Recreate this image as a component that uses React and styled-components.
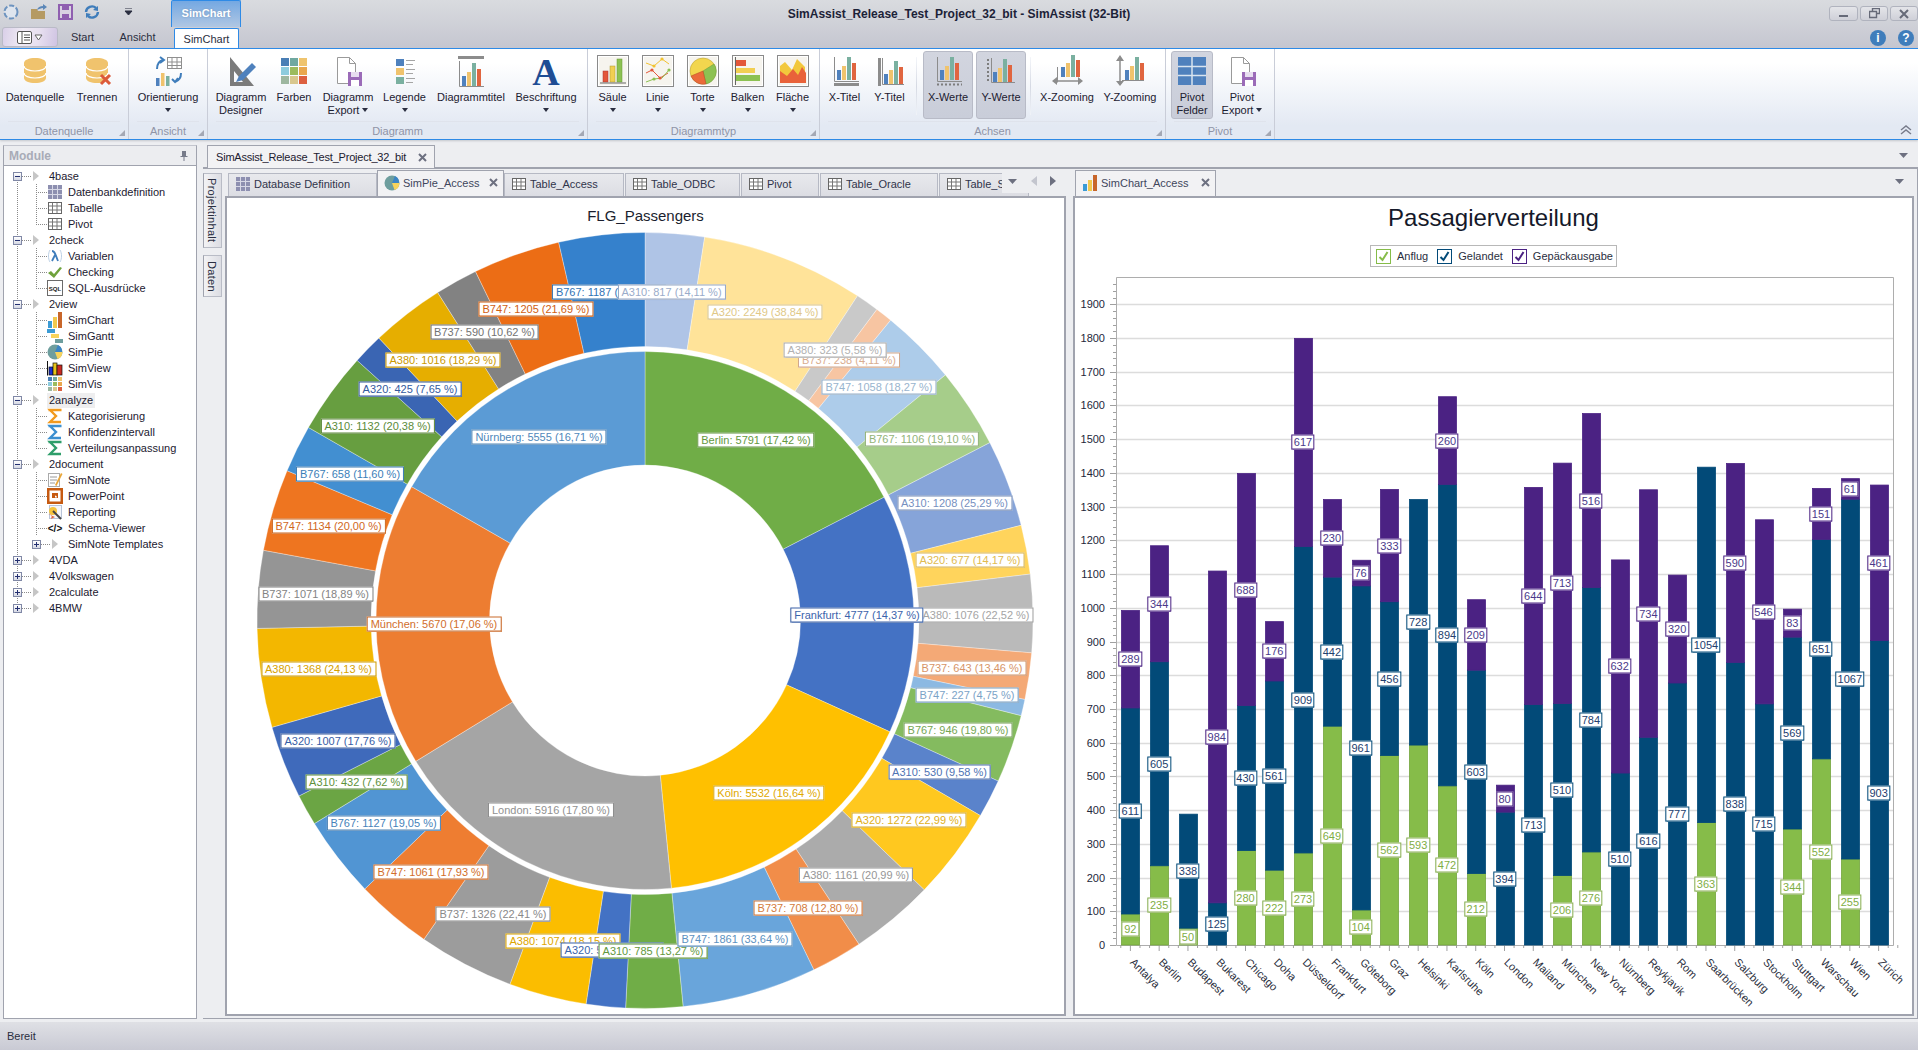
import React from 'react';
import styled, { createGlobalStyle } from 'styled-components';

const FONT = '"Liberation Sans", Arial, sans-serif';

const Global = createGlobalStyle`
  html, body { margin: 0; padding: 0; background: #edeef1; }
  * { box-sizing: border-box; }
`;

// helpers for colour and chart geometry
const shade = (hex, f) =>
  '#' + [1, 3, 5].map((i) => Math.round(parseInt(hex.slice(i, i + 2), 16) * f).toString(16).padStart(2, '0')).join('');

const polar = (cx, cy, r, a) => [cx + r * Math.sin(a), cy - r * Math.cos(a)];
const arcPath = (cx, cy, r0, r1, a0, a1) => {
  const big = a1 - a0 > Math.PI ? 1 : 0;
  const [x1, y1] = polar(cx, cy, r1, a0);
  const [x2, y2] = polar(cx, cy, r1, a1);
  const [x3, y3] = polar(cx, cy, r0, a1);
  const [x4, y4] = polar(cx, cy, r0, a0);
  return `M${x1} ${y1}A${r1} ${r1} 0 ${big} 1 ${x2} ${y2}L${x3} ${y3}A${r0} ${r0} 0 ${big} 0 ${x4} ${y4}Z`;
};

/* ---------- page frame ---------- */

const Page = styled.div`
  width: 1918px;
  height: 1050px;
  overflow: hidden;
  display: flex;
  flex-direction: column;
  background: #edeef1;
  font: 11px ${FONT};
  color: #1e2233;
`;

const TitleBar = styled.header`
  height: 48px;
  flex: none;
  background: linear-gradient(#d9dbdf, #c5c6d0);
`;

const TopRow = styled.div`
  height: 27px;
  display: grid;
  grid-template-columns: 1fr auto 1fr;
`;

const TopLeft = styled.div`
  display: flex;
`;

const Qat = styled.div`
  width: 171px;
  display: flex;
  align-items: center;
  padding-left: 3px;
  padding-bottom: 4px;
  gap: 11px;
`;

const QatArrow = styled.svg`
  margin-left: 13px;
`;

const ContextTab = styled.div`
  width: 70px;
  height: 27px;
  border: 1px solid #2e8ae6;
  border-bottom: 0;
  border-radius: 2px 2px 0 0;
  background: linear-gradient(#74a8e2, #b0c7e3);
  color: #fff;
  font-weight: bold;
  text-align: center;
  line-height: 24px;
  text-shadow: 0 0 2px #6f8fb5;
`;

const WindowTitle = styled.div`
  font-weight: bold;
  font-size: 12px;
  line-height: 28px;
  color: #1c2238;
`;

const WindowButtons = styled.div`
  display: flex;
  justify-content: flex-end;
  gap: 2px;
  padding-top: 6px;
`;

const WindowButton = styled.div`
  width: ${(p) => p.$w}px;
  height: 15px;
  border: 1px solid #b0b3be;
  border-radius: 3px;
  background: linear-gradient(#e4e5e9, #cfd0d8);
  display: flex;
  align-items: center;
  justify-content: center;
`;

const TabRow = styled.div`
  height: 21px;
  display: flex;
  align-items: flex-end;
  padding-left: 2px;
`;

const FileButton = styled.div`
  width: 56px;
  height: 20px;
  align-self: flex-start;
  border: 1px solid #b9bac6;
  border-radius: 3px;
  background: linear-gradient(100deg, #d9cfe8, #efeaf4 35%, #e8e0f0 65%, #cfc3e2);
  display: flex;
  align-items: center;
  justify-content: center;
`;

const RibbonTab = styled.div`
  width: ${(p) => p.$w}px;
  height: 21px;
  margin-left: ${(p) => p.$ml || 0}px;
  text-align: center;
  line-height: 21px;
  color: #2a2e40;
  ${(p) =>
    p.$active &&
    `background:#fff;border:1px solid #2e8ae6;border-bottom:0;border-radius:2px 2px 0 0;line-height:20px;position:relative;top:1px;`}
`;

const HelpIcons = styled.div`
  margin-left: auto;
  display: flex;
  gap: 12px;
  padding: 0 4px 2px 0;
`;

const HelpIcon = styled.span`
  width: 16px;
  height: 16px;
  border-radius: 50%;
  background: #3f7dbb;
  color: #fff;
  font-weight: bold;
  font-size: 12px;
  text-align: center;
  line-height: 16px;
`;

/* ---------- ribbon ---------- */

const Ribbon = styled.section`
  height: 92px;
  flex: none;
  display: flex;
  position: relative;
  border-top: 1px solid #2e8ae6;
  border-bottom: 1px solid #2e8ae6;
  background: linear-gradient(#fff 15%, #e3e9f3 85%);
  box-shadow: 0 1px 2px #c4c6cc;
`;

const Group = styled.div`
  width: ${(p) => p.$w}px;
  flex: none;
  display: flex;
  flex-direction: column;
  position: relative;
  border-right: 1px solid #c9cdd8;
`;

const GroupBody = styled.div`
  height: 72px;
  padding: 2px 0 0 ${(p) => p.$pl || 0}px;
  display: flex;
  align-items: flex-start;
`;

const GroupFooter = styled.div`
  margin: 0 8px;
  height: 18px;
  border-top: 1px solid #dfe3ec;
  text-align: center;
  line-height: 19px;
  color: #8f94a6;
`;

const Launcher = styled.i`
  position: absolute;
  right: 3px;
  bottom: 3px;
  width: 0;
  height: 0;
  border-left: 6px solid transparent;
  border-bottom: 6px solid #a4a8b4;
`;

const RibbonButton = styled.div`
  width: ${(p) => p.$w}px;
  height: 68px;
  margin-left: ${(p) => p.$ml || 0}px;
  flex: none;
  padding-top: 3px;
  display: flex;
  flex-direction: column;
  align-items: center;
  color: #1c2030;
  line-height: 13px;
  text-align: center;
  border: 1px solid transparent;
  border-radius: 3px;
  ${(p) => p.$active && `background:linear-gradient(#d2d5df,#c9cdd9);border-color:#b8bbc7;`}
`;

const IconBox = styled.div`
  width: 32px;
  height: 32px;
  margin-bottom: 4px;
  flex: none;
`;

const Caret = styled.i`
  display: inline-block;
  width: 0;
  height: 0;
  margin: ${(p) => (p.$inline ? '0 0 2px 3px' : '4px 0 0')};
  border-left: 3.5px solid transparent;
  border-right: 3.5px solid transparent;
  border-top: 4px solid #2a2e40;
`;

const RibbonSep = styled.div`
  width: 1px;
  height: 58px;
  margin: 6px ${(p) => p.$mr}px 0 ${(p) => p.$ml}px;
  flex: none;
  background: linear-gradient(#f4f6fa, #d5d9e3, #f0f3f8);
`;

const Collapse = styled.svg`
  position: absolute;
  right: 6px;
  bottom: 4px;
`;

/* ---------- body ---------- */

const Body = styled.main`
  flex: 1;
  min-height: 0;
  display: flex;
  padding: 5px 0 3px 3px;
`;

const ModulePanel = styled.aside`
  width: 194px;
  flex: none;
  display: flex;
  flex-direction: column;
  border: 1px solid #a0a3ae;
  border-top-color: #c3c5ce;
`;

const ModuleHeader = styled.div`
  height: 20px;
  flex: none;
  display: flex;
  align-items: center;
  justify-content: space-between;
  padding: 0 8px 0 5px;
  font-weight: bold;
  font-size: 12px;
  color: #a8abb7;
  background: #ecedf0;
  border-bottom: 1px solid #a0a3ae;
`;

const Tree = styled.div`
  flex: 1;
  background-color: #fff;
  background-image: repeating-linear-gradient(#8a8a8a 0 1px, transparent 1px 2px);
  background-size: 1px 432px;
  background-repeat: no-repeat;
  background-position: 13px 10px;
  padding-top: 2px;
  color: #1c2030;
`;

const TreeRow = styled.div`
  height: 16px;
  display: flex;
  align-items: center;
  padding-left: ${(p) => p.$pl}px;
`;

const Expander = styled.i`
  width: 9px;
  height: 9px;
  flex: none;
  position: relative;
  border: 1px solid #8088a6;
  background: linear-gradient(#fff, #d5d8e4);
  &::before {
    content: '';
    position: absolute;
    left: 1px;
    right: 1px;
    top: 3px;
    height: 1px;
    background: #232f70;
  }
  ${(p) =>
    p.$plus &&
    `&::after{content:'';position:absolute;top:1px;bottom:1px;left:3px;width:1px;background:#232f70;}`}
`;

const HDots = styled.i`
  width: 9px;
  height: 1px;
  flex: none;
  background: repeating-linear-gradient(90deg, #8a8a8a 0 1px, transparent 1px 2px);
`;

const Triangle = styled.i`
  width: 0;
  height: 0;
  flex: none;
  margin: 0 10px 0 2px;
  border-top: 5px solid transparent;
  border-bottom: 5px solid transparent;
  border-left: 6px solid #c6c6c6;
`;

const NodeLabel = styled.span`
  padding: 0 2px;
  margin-left: -2px;
  line-height: 15px;
  ${(p) => p.$selected && `background:#eeeeef;`}
`;

const Connector = styled.i`
  width: 11px;
  height: 16px;
  margin-left: 32px;
  flex: none;
  background-image: repeating-linear-gradient(#8a8a8a 0 1px, transparent 1px 2px),
    repeating-linear-gradient(90deg, #8a8a8a 0 1px, transparent 1px 2px);
  background-size: 1px ${(p) => (p.$last ? 8 : 16)}px, 11px 1px;
  background-position: 0 0, 0 8px;
  background-repeat: no-repeat;
`;

const NodeIcon = styled.svg`
  width: 16px;
  height: 16px;
  flex: none;
  margin-right: 5px;
`;

const SchemaGlyph = styled.span`
  width: 16px;
  flex: none;
  margin-right: 5px;
  font-weight: bold;
  font-size: 10px;
  text-align: center;
  color: #111;
  white-space: nowrap;
`;

const Workspace = styled.div`
  flex: 1;
  min-width: 0;
  margin-left: 6px;
  display: flex;
  flex-direction: column;
`;

const DocTabs = styled.div`
  height: 22px;
  flex: none;
  padding-left: 4px;
  display: flex;
  align-items: flex-end;
  justify-content: space-between;
  padding-right: 9px;
`;

const DocTab = styled.div`
  width: 228px;
  height: 23px;
  position: relative;
  top: 1px;
  padding: 0 7px 0 8px;
  display: flex;
  align-items: center;
  justify-content: space-between;
  background: #f2f2f4;
  border: 1px solid #a0a3ae;
  border-bottom: 0;
  color: #1c2030;
  letter-spacing: -0.2px;
`;

const DocArrow = styled.span`
  display: flex;
  margin-bottom: 8px;
`;

const DocPanel = styled.div`
  flex: 1;
  min-height: 0;
  display: flex;
  border-top: 2px solid #a0a3ae;
  border-right: 1px solid #a0a3ae;
  border-bottom: 1px solid #a0a3ae;
  padding-bottom: 2px;
`;

const SideTabs = styled.div`
  width: 22px;
  flex: none;
  padding-top: 4px;
  display: flex;
  flex-direction: column;
  gap: 7px;
`;

const SideTab = styled.div`
  width: 19px;
  height: ${(p) => p.$h}px;
  writing-mode: vertical-rl;
  text-align: center;
  line-height: 18px;
  letter-spacing: 0.3px;
  border: 1px solid #b9bcc6;
  border-left-color: #a0a3ae;
  background: linear-gradient(90deg, #f3f3f5, #dcdde3);
  color: #2a2e40;
`;

const Pane = styled.section`
  width: 841px;
  flex: none;
  margin-right: 7px;
  display: flex;
  flex-direction: column;
`;

const PaneTabs = styled.div`
  height: 27px;
  flex: none;
  display: flex;
  align-items: flex-end;
  padding-left: ${(p) => p.$pl || 0}px;
  position: relative;
  overflow: hidden;
`;

const PaneTab = styled.div`
  width: ${(p) => p.$w}px;
  height: ${(p) => (p.$active ? 26 : 23)}px;
  flex: none;
  margin-right: ${(p) => p.$mr || 0}px;
  padding: 0 5px 2px 6px;
  display: flex;
  align-items: center;
  gap: 3px;
  white-space: nowrap;
  overflow: hidden;
  color: #30344a;
  border: 1px solid #b6b9c4;
  border-bottom: 0;
  background: linear-gradient(#e8e9ed, #dcdde3);
  ${(p) => p.$active && `background:#f2f2f4;border-color:#a0a3ae;color:#40465c;`}
  svg {
    flex: none;
  }
`;

const PaneTabClose = styled.svg`
  margin-left: auto;
  flex: none;
`;

const PaneControls = styled.div`
  position: absolute;
  right: ${(p) => p.$r}px;
  bottom: 3px;
  height: 20px;
  display: flex;
  align-items: center;
  gap: ${(p) => p.$gap || 0}px;
  padding: 0 ${(p) => p.$pr || 0}px 4px ${(p) => p.$pl || 0}px;
  background: #edeef1;
`;

const ChartBox = styled.div`
  flex: 1;
  min-height: 0;
  display: flex;
  flex-direction: column;
  border: 2px solid #a0a3ae;
  background: #fff;
`;

const PieTitle = styled.div`
  height: 34px;
  flex: none;
  padding-top: 9px;
  text-align: center;
  font-size: 15px;
  line-height: 18px;
  color: #1a1e2e;
`;

const BarTitle = styled.div`
  height: 38px;
  flex: none;
  text-align: center;
  font-size: 24px;
  line-height: 40px;
  color: #15192a;
`;

const Legend = styled.div`
  align-self: center;
  height: 22px;
  width: 247px;
  margin-top: 9px;
  flex: none;
  display: flex;
  align-items: center;
  padding-left: 5px;
  border: 1px solid #b8b8b8;
  color: #2a2e40;
`;

const LegendItem = styled.div`
  display: flex;
  align-items: center;
  gap: 6px;
  margin-right: ${(p) => p.$mr}px;
`;

const LegendBox = styled.span`
  width: 15px;
  height: 15px;
  flex: none;
  border: 1px solid ${(p) => p.$c};
  display: flex;
  align-items: center;
  justify-content: center;
`;

const Canvas = styled.div`
  flex: 1;
  position: relative;
  min-height: 0;
`;

const ChartSvg = styled.svg`
  display: block;
  width: 100%;
  height: 100%;
  font-family: ${FONT};
  font-size: 11px;
`;

const ChartLabel = styled.span.attrs((p) => ({
  style: { left: p.$x, top: p.$y, color: p.$c, borderColor: p.$b, boxShadow: `0 0 1px ${p.$b}` },
}))`
  position: absolute;
  transform: translate(-50%, -50%);
  height: 15px;
  padding: 0 ${(p) => p.$px}px;
  white-space: nowrap;
  font-size: 11px;
  line-height: 13px;
  background: #fff;
  border: 1px solid;
`;

const StatusBar = styled.footer`
  height: 28px;
  flex: none;
  padding-left: 7px;
  display: flex;
  align-items: center;
  background: linear-gradient(#dfe0e5, #c9cad4);
  color: #2a2e40;
`;

/* ---------- ribbon icons ---------- */

const Bars = ({ base = 26, dx = 0 }) => (
  <g transform={`translate(${dx} 0)`}>
    <rect x="8" y={base - 10} width="4" height="10" fill="#4f81bd" />
    <rect x="13" y={base - 14} width="4" height="14" fill="#f0c36d" />
    <rect x="18" y={base - 23} width="4" height="23" fill="#7ab0a0" />
    <rect x="23" y={base - 17} width="4" height="17" fill="#e0653f" />
  </g>
);

const Axes = ({ x = 5, y = 26 }) => <path d={`M${x + 0.5} 2V${y + 0.5}H30`} fill="none" stroke="#8c8c8c" />;

const Cylinder = () => (
  <>
    <path d="M5 8c0-3 5-5 11-5s11 2 11 5v15c0 3-5 5-11 5S5 26 5 23z" fill="#f0c36d" />
    <path d="M5 11c0 3 5 5 11 5s11-2 11-5M5 18c0 3 5 5 11 5s11-2 11-5" fill="none" stroke="#fff" strokeWidth="1.2" />
  </>
);

const DocFloppy = () => (
  <>
    <path d="M5.5 2.5h12l6 6v20h-18z" fill="#fff" stroke="#9a9a9a" />
    <path d="M17.5 2.5v6h6" fill="none" stroke="#9a9a9a" />
    <rect x="16" y="17" width="14" height="14" fill="#9b6bb8" />
    <rect x="19" y="17" width="8" height="5" fill="#e8def0" />
    <rect x="19" y="25" width="8" height="6" fill="#fff" />
  </>
);

const Tile = ({ children }) => (
  <>
    <rect x="0.5" y="0.5" width="31" height="31" fill="#f6f4ee" stroke="#8a8a8a" />
    <rect x="1.5" y="1.5" width="29" height="29" fill="none" stroke="#fff" />
    {children}
  </>
);

const swatches = ['#4a7eb5', '#6fa8a0', '#efc46e', '#8dcbdd', '#9cbb5e', '#e9a74e', '#9eb7a0', '#d9c78e', '#dd6040'];

const ribbonIcons = {
  db: <Cylinder />,
  disconnect: (
    <>
      <Cylinder />
      <path d="M20 20l9 9m0-9l-9 9" stroke="#dc5a3a" strokeWidth="3" />
    </>
  ),
  orient: (
    <>
      <rect x="15.5" y="2.5" width="14" height="11" fill="#fff" stroke="#8f8f8f" />
      <path d="M20 3v10M25 3v10M16 7h13M16 10.5h13" stroke="#8f8f8f" />
      <rect x="4" y="23" width="3.5" height="8" fill="#4f81bd" />
      <rect x="9" y="18" width="3.5" height="13" fill="#f0c36d" />
      <rect x="14" y="21" width="3.5" height="10" fill="#7ab0a0" />
      <path d="M5 14c0-5 2-8 6-9M8 2l4 3-4 3M29 18c0 5-3 8-6 9M20 24l3 3 3-4" fill="none" stroke="#3f7dbb" strokeWidth="2" />
    </>
  ),
  designer: (
    <>
      <path d="M5 2v29h24L5 2zm4 14l9 11H9z" fill="#7b7b7b" fillRule="evenodd" />
      <path d="M11 27l3-6 13-13 4 4-13 13z" fill="#4f81bd" />
    </>
  ),
  colors: (
    <>
      {swatches.map((c, i) => (
        <rect key={c} x={3 + (i % 3) * 9} y={3 + Math.floor(i / 3) * 9} width="8" height="8" fill={c} />
      ))}
    </>
  ),
  exportDoc: <DocFloppy />,
  legend: (
    <>
      {['#4f81bd', '#f0c36d', '#7ab0a0'].map((c, i) => (
        <g key={c}>
          <rect x="7" y={4 + i * 9} width="8" height="7" fill={c} />
          <path d={`M17 ${5.5 + i * 9}h9M17 ${9.5 + i * 9}h7`} stroke="#a5a5a5" />
        </g>
      ))}
    </>
  ),
  title: (
    <>
      <rect x="3" y="1" width="26" height="3" fill="#8c8c8c" />
      <path d="M4.5 6v25.5H29" fill="none" stroke="#8c8c8c" />
      <g transform="translate(-1 5)">
        <Bars />
      </g>
    </>
  ),
  column: (
    <Tile>
      <rect x="6" y="16" width="5" height="11" fill="#e3573a" stroke="#a33" strokeWidth=".5" />
      <rect x="13" y="11" width="5" height="16" fill="#f2cf52" stroke="#a93" strokeWidth=".5" />
      <rect x="20" y="4" width="5" height="23" fill="#8cc152" stroke="#693" strokeWidth=".5" />
      <path d="M3 28h26" stroke="#666" />
    </Tile>
  ),
  line: (
    <Tile>
      <path d="M4 8l8 3 8-7 7 5" fill="none" stroke="#f2c230" />
      <path d="M4 18l6-3 8 8 8-5" fill="none" stroke="#e3573a" />
      <path d="M4 27l8-3 8-1 7-8" fill="none" stroke="#8cc152" />
      <circle cx="12" cy="11" r="1.6" fill="#f2c230" />
      <circle cx="20" cy="4" r="1.6" fill="#f2c230" />
      <circle cx="10" cy="15" r="1.6" fill="#e3573a" />
      <circle cx="18" cy="23" r="1.6" fill="#e3573a" />
      <circle cx="12" cy="24" r="1.6" fill="#8cc152" />
      <circle cx="27" cy="15" r="1.6" fill="#8cc152" />
    </Tile>
  ),
  pie: (
    <Tile>
      <circle cx="16" cy="16" r="13" fill="#f2d64e" stroke="#b39a2e" strokeWidth=".5" />
      <path d="M16 16L27 9a13 13 0 0 1-8 20z" fill="#8cc152" stroke="#6a9a3b" strokeWidth=".5" />
      <path d="M16 16l3 13A13 13 0 0 1 4 21z" fill="#ea6a3a" stroke="#b04a24" strokeWidth=".5" />
    </Tile>
  ),
  bar: (
    <Tile>
      <path d="M3.5 2v28" stroke="#666" />
      <rect x="4" y="5" width="10" height="6" fill="#e3573a" />
      <rect x="4" y="13" width="19" height="5" fill="#f2cf52" />
      <rect x="4" y="20" width="24" height="6" fill="#8cc152" />
    </Tile>
  ),
  area: (
    <Tile>
      <path d="M3 28V11l5-4 7 8 5-11 8 8v16z" fill="#f2c83c" />
      <path d="M3 28V16l7 5 6-7 5 6 4-8 4 6v10z" fill="#e9623a" />
    </Tile>
  ),
  xtitle: (
    <>
      <Axes />
      <Bars base={25} />
      <rect x="5" y="28" width="25" height="3" fill="#8c8c8c" />
    </>
  ),
  ytitle: (
    <>
      <path d="M4 3h3v28H4z" fill="#8c8c8c" />
      <path d="M8.5 3v26.5H30" fill="none" stroke="#8c8c8c" />
      <Bars base={29} dx={2} />
    </>
  ),
  xvalues: (
    <>
      <Axes />
      <Bars base={25} />
      <path d="M5 29.5h25" stroke="#7d7d7d" strokeWidth="2" strokeDasharray="2 2" />
    </>
  ),
  yvalues: (
    <>
      <path d="M3 4v24" stroke="#7d7d7d" strokeWidth="2" strokeDasharray="2 2" />
      <path d="M6.5 3v24.5H30" fill="none" stroke="#8c8c8c" />
      <Bars base={27} />
    </>
  ),
  xzoom: (
    <>
      <Bars base={22} dx={2} />
      <path d="M6.5 12v15.5" stroke="#8c8c8c" />
      <path d="M3 26h27" stroke="#8c8c8c" strokeWidth="1.5" />
      <path d="M1 26l5-4v8zM32 26l-5-4v8z" fill="#8c8c8c" />
    </>
  ),
  yzoom: (
    <>
      <Bars base={25} dx={3} />
      <path d="M6 4v24" stroke="#8c8c8c" strokeWidth="1.5" />
      <path d="M6 0l-4 6h8zM6 31l-4-5h8z" fill="#8c8c8c" />
      <path d="M8 25.5h22" stroke="#8c8c8c" />
    </>
  ),
  pivot: (
    <>
      <rect x="2" y="2" width="28" height="28" fill="#4f81bd" />
      <path d="M16 2v28M2 11.5h28M2 20.5h28" stroke="#d8e4f0" strokeWidth="1.5" />
    </>
  ),
};

const BigA = styled.div`
  font: bold 38px "Liberation Serif", serif;
  line-height: 34px;
  text-align: center;
  color: #1f4d94;
`;

const RibbonIcon = ({ name }) => (
  <IconBox>
    {name === 'letter' ? (
      <BigA>A</BigA>
    ) : (
      <svg width="32" height="32" viewBox="0 0 32 32">
        {ribbonIcons[name]}
      </svg>
    )}
  </IconBox>
);

const RButton = ({ w, ml, icon, lines, caret, active }) => (
  <RibbonButton $w={w} $ml={ml} $active={active}>
    <RibbonIcon name={icon} />
    {lines.map((l, i) => (
      <span key={l}>
        {l}
        {caret === 'inline' && i === 1 && <Caret $inline />}
      </span>
    ))}
    {caret === 'below' && <Caret />}
  </RibbonButton>
);

/* ---------- tree icons ---------- */

const Grid16 = () => (
  <>
    <rect x="1.5" y="2.5" width="13" height="11" fill="#fff" stroke="#666" />
    <path d="M5.5 3v10M10 3v10M2 6h12M2 10h12" stroke="#777" />
  </>
);

const treeIcons = {
  db: (
    <>
      <rect x="1" y="1" width="14" height="14" fill="#8d8fb0" />
      <path d="M1 5.5h14M1 10.5h14M5.5 1v14M10.5 1v14" stroke="#d7d8e6" />
    </>
  ),
  grid: <Grid16 />,
  lambda: (
    <>
      <path d="M3 2c-2 3-2 9 0 12M13 2c2 3 2 9 0 12" fill="none" stroke="#bcd0e6" />
      <path d="M5 3c3 0 3 3 6 10M8 7l-3 6" fill="none" stroke="#3f7dbb" strokeWidth="1.8" />
    </>
  ),
  check: <path d="M1 9l3-2 3 3 6-7 2 1-8 10z" fill="#6fa23c" />,
  sql: (
    <>
      <rect x=".5" y=".5" width="15" height="15" fill="#fff" stroke="#6a6a6a" />
      <text x="8" y="10.5" fontSize="6" fontWeight="bold" textAnchor="middle" fontFamily={FONT} fill="#222">
        SQL
      </text>
    </>
  ),
  chart: (
    <>
      <rect x="1" y="9" width="4" height="7" fill="#3b9bd5" />
      <rect x="6" y="5" width="4" height="11" fill="#f2c94e" />
      <rect x="11" y="0" width="4" height="16" fill="#c8662a" />
    </>
  ),
  gantt: (
    <>
      <rect x="0" y="1" width="8" height="4" fill="#3b9bd5" />
      <rect x="4" y="6" width="8" height="4" fill="#f7d35c" />
      <rect x="8" y="11" width="8" height="4" fill="#6e9e9e" />
    </>
  ),
  pie: (
    <>
      <circle cx="8" cy="8" r="7.5" fill="#6e9e9e" />
      <path d="M8 8l3-7a7.5 7.5 0 0 1 4 7z" fill="#3b85c5" />
      <path d="M8 8h7.5a7.5 7.5 0 0 1-5 7z" fill="#f7d35c" />
    </>
  ),
  view: (
    <>
      <path d="M0.5 15.5V1" stroke="#111" fill="none" />
      <rect x="2" y="7" width="4" height="8" fill="#1a2fd0" stroke="#111" strokeWidth=".7" />
      <rect x="6" y="3" width="4" height="12" fill="#e8c418" stroke="#111" strokeWidth=".7" />
      <rect x="10" y="5" width="5" height="10" fill="#c92a20" stroke="#111" strokeWidth=".7" />
    </>
  ),
  vis: (
    <>
      {swatches.map((c, i) => (
        <rect key={c} x={1 + (i % 3) * 5} y={1 + Math.floor(i / 3) * 5} width="4" height="4" fill={c} />
      ))}
    </>
  ),
  sigmaO: <path d="M1.5 2h13M13 2H3l6 6-6 6h11" fill="none" stroke="#f29a1e" strokeWidth="2.4" />,
  sigmaB: <path d="M1.5 2h13M13 2H3l6 6-6 6h11" fill="none" stroke="#3b8fd0" strokeWidth="2.4" />,
  sigmaG: <path d="M1.5 2h13M13 2H3l6 6-6 6h11" fill="none" stroke="#2e9e6a" strokeWidth="2.4" />,
  note: (
    <>
      <rect x="1.5" y="1.5" width="11" height="13" fill="#fff" stroke="#aaa" />
      <path d="M3 5h7M3 8h7M3 11h5" stroke="#999" />
      <path d="M8 13l6-12 1.5 1-6 12z" fill="#e9a63a" />
    </>
  ),
  ppt: (
    <>
      <rect x="0" y="0" width="16" height="16" fill="#c65a11" />
      <rect x="2.5" y="2.5" width="11" height="11" fill="#fff" />
      <path d="M5 5h6v5H5z" fill="#c65a11" />
      <path d="M8 7.5v2h2a2 2 0 0 0-2-2z" fill="#fff" />
    </>
  ),
  wand: (
    <>
      <rect x="2.5" y="1.5" width="12" height="13" fill="#f3f6fb" stroke="#b8c4d8" />
      <circle cx="6" cy="7" r="4" fill="#f5c33c" />
      <path d="M6 7l8 8" stroke="#444" strokeWidth="2" />
      <path d="M1 10l4 1-1 4 4-2" fill="#e0653f" />
    </>
  ),
};

const tree = [
  { label: '4base', children: [['Datenbankdefinition', 'db'], ['Tabelle', 'grid'], ['Pivot', 'grid']] },
  { label: '2check', children: [['Variablen', 'lambda'], ['Checking', 'check'], ['SQL-Ausdrücke', 'sql']] },
  {
    label: '2view',
    children: [['SimChart', 'chart'], ['SimGantt', 'gantt'], ['SimPie', 'pie'], ['SimView', 'view'], ['SimVis', 'vis']],
  },
  {
    label: '2analyze',
    selected: true,
    children: [['Kategorisierung', 'sigmaO'], ['Konfidenzintervall', 'sigmaB'], ['Verteilungsanpassung', 'sigmaG']],
  },
  {
    label: '2document',
    children: [['SimNote', 'note'], ['PowerPoint', 'ppt'], ['Reporting', 'wand'], ['Schema-Viewer', 'schema'], ['SimNote Templates', 'folder']],
  },
  { label: '4VDA', closed: true },
  { label: '4Volkswagen', closed: true },
  { label: '2calculate', closed: true },
  { label: '4BMW', closed: true },
];

const ModuleTree = () => (
  <Tree>
    {tree.map((node) => (
      <React.Fragment key={node.label}>
        <TreeRow $pl={9}>
          <Expander $plus={node.closed} />
          <HDots />
          <Triangle />
          <NodeLabel $selected={node.selected}>{node.label}</NodeLabel>
        </TreeRow>
        {(node.children || []).map(([label, icon], i) =>
          icon === 'folder' ? (
            <TreeRow key={label} $pl={28}>
              <Expander $plus />
              <HDots />
              <Triangle />
              <NodeLabel>{label}</NodeLabel>
            </TreeRow>
          ) : (
            <TreeRow key={label}>
              <Connector $last={i === node.children.length - 1} />
              {icon === 'schema' ? (
                <SchemaGlyph>&lt;/&gt;</SchemaGlyph>
              ) : (
                <NodeIcon viewBox="0 0 16 16">{treeIcons[icon]}</NodeIcon>
              )}
              <NodeLabel>{label}</NodeLabel>
            </TreeRow>
          )
        )}
      </React.Fragment>
    ))}
  </Tree>
);

/* ---------- small glyphs ---------- */

const TabClose = ({ size = 9 }) => (
  <PaneTabClose width={size} height={size} viewBox="0 0 9 9">
    <path d="M1 1l7 7m0-7L1 8" stroke="#6d7080" strokeWidth="2" />
  </PaneTabClose>
);

const SmallGrid = () => (
  <svg width="16" height="16" viewBox="0 0 16 16">
    <Grid16 />
  </svg>
);

const ArrowDown = ({ c = '#6d7080' }) => (
  <svg width="11" height="7" viewBox="0 0 11 7">
    <path d="M1 1h9L5.5 6z" fill={c} />
  </svg>
);

/* ---------- pie chart ---------- */

const PIE_OX = 227;
const PIE_OY = 232;
const PIE_CX = 645 - PIE_OX;
const PIE_CY = 620.5 - PIE_OY;

const cities = [
  { v: 5791, c: '#70ad47', parts: [[817, '#afc4e6'], [2249, '#ffe399'], [323, '#c9c9c9'], [238, '#f7c5a2'], [1058, '#adcCea'], [1106, '#a6cd8a']] },
  { v: 4777, c: '#4472c4', parts: [[1208, '#86a4d9'], [677, '#ffd45c'], [1076, '#bababa'], [643, '#f4a976'], [227, '#8cb9e2'], [946, '#84bb5f']] },
  { v: 5532, c: '#ffc000', parts: [[530, '#5a83cb'], [1272, '#ffc81f'], [1161, '#ababab'], [708, '#f18d49'], [1861, '#69a5db']] },
  { v: 5916, c: '#a5a5a5', parts: [[785, '#70ad47'], [543, '#4372c4'], [1074, '#fbbd00'], [1326, '#9c9c9c'], [1061, '#ee7d31'], [1127, '#5195d3']] },
  { v: 5670, c: '#ed7d31', parts: [[432, '#6ba544'], [1007, '#3f6abb'], [1368, '#f3b700'], [1071, '#959595'], [1134, '#ee7520'], [658, '#428fd1']] },
  { v: 5555, c: '#5b9bd5', parts: [[1132, '#679e40'], [425, '#3a65b3'], [1016, '#e6ae00'], [590, '#828282'], [1205, '#ec6d15'], [1187, '#3581cc']] },
];

const PIE_TOTAL = cities.reduce((s, c) => s + c.v, 0);

const pieSlices = (() => {
  const out = [];
  let a = 0;
  let b = 0;
  cities.forEach((city) => {
    const next = a + (city.v / PIE_TOTAL) * Math.PI * 2;
    out.push({ d: arcPath(PIE_CX, PIE_CY, 155.5, 269, a, next), c: city.c });
    a = next;
    city.parts.forEach(([v, c]) => {
      const end = b + (v / PIE_TOTAL) * Math.PI * 2;
      out.push({ d: arcPath(PIE_CX, PIE_CY, 274, 388, b, end), c });
      b = end;
    });
  });
  return out;
})();

// label centres in page pixels, in paint order
const pieLabels = [
  ['B767: 1187 (21,37 %)', 609, 292, '#3581cc'],
  ['B747: 1205 (21,69 %)', 536, 309, '#ec6d15'],
  ['B737: 590 (10,62 %)', 484.5, 332, '#828282'],
  ['A380: 1016 (18,29 %)', 443, 359.5, '#e6ae00'],
  ['A320: 425 (7,65 %)', 410, 389, '#3a65b3'],
  ['A310: 1132 (20,38 %)', 377.5, 426, '#679e40'],
  ['B767: 658 (11,60 %)', 350, 474, '#428fd1'],
  ['B747: 1134 (20,00 %)', 328.5, 526, '#ee7520'],
  ['B737: 1071 (18,89 %)', 315.5, 594, '#959595'],
  ['A380: 1368 (24,13 %)', 318.5, 669, '#f3b700'],
  ['A320: 1007 (17,76 %)', 338, 741, '#3f6abb'],
  ['A310: 432 (7,62 %)', 356.5, 782, '#6ba544'],
  ['B767: 1127 (19,05 %)', 383.5, 823, '#5195d3'],
  ['B747: 1061 (17,93 %)', 431, 872, '#ee7d31'],
  ['B737: 1326 (22,41 %)', 493, 914, '#9c9c9c'],
  ['A380: 1074 (18,15 %)', 563, 941, '#fbbd00'],
  ['A320: 543 (9,18 %)', 612, 949.5, '#4372c4'],
  ['A310: 785 (13,27 %)', 653, 951, '#70ad47'],
  ['B747: 1861 (33,64 %)', 735, 939, '#69a5db'],
  ['B737: 708 (12,80 %)', 808, 908, '#f18d49'],
  ['A380: 1161 (20,99 %)', 856, 875, '#ababab'],
  ['A320: 1272 (22,99 %)', 909, 820, '#ffc81f'],
  ['A310: 530 (9,58 %)', 939.5, 772, '#5a83cb'],
  ['B767: 946 (19,80 %)', 958, 730, '#84bb5f'],
  ['B747: 227 (4,75 %)', 967, 695, '#8cb9e2'],
  ['B737: 643 (13,46 %)', 972, 668, '#f4a976'],
  ['A380: 1076 (22,52 %)', 976, 614.5, '#bababa'],
  ['A320: 677 (14,17 %)', 970, 560, '#ffd45c'],
  ['A310: 1208 (25,29 %)', 954.5, 503, '#86a4d9'],
  ['B767: 1106 (19,10 %)', 922, 439, '#a6cd8a'],
  ['B747: 1058 (18,27 %)', 879, 387, '#adccea'],
  ['B737: 238 (4,11 %)', 849, 360, '#f7c5a2'],
  ['A380: 323 (5,58 %)', 835, 350, '#c9c9c9'],
  ['A320: 2249 (38,84 %)', 765, 312, '#ffe399'],
  ['A310: 817 (14,11 %)', 671.5, 291.5, '#afc4e6'],
  ['Berlin: 5791 (17,42 %)', 756, 440, '#70ad47'],
  ['Frankfurt: 4777 (14,37 %)', 857, 615, '#4472c4'],
  ['Köln: 5532 (16,64 %)', 769, 793, '#ffc000'],
  ['London: 5916 (17,80 %)', 551, 810, '#a5a5a5'],
  ['München: 5670 (17,06 %)', 434, 624, '#ed7d31'],
  ['Nürnberg: 5555 (16,71 %)', 539, 437, '#5b9bd5'],
];

const PieChart = () => (
  <Canvas>
    <ChartSvg>
      {pieSlices.map((s, i) => (
        <path key={i} d={s.d} fill={s.c} stroke="#fff" strokeOpacity=".55" strokeWidth=".6" />
      ))}
    </ChartSvg>
    {pieLabels.map(([t, x, y, c]) => (
      <ChartLabel key={t} $x={x - PIE_OX} $y={y - PIE_OY} $c={shade(c, 0.88)} $b={shade(c, 0.85)} $px={3}>
        {t}
      </ChartLabel>
    ))}
  </Canvas>
);

/* ---------- bar chart ---------- */

const BAR_OX = 1075;
const BAR_OY = 267;
const PLOT_L = 1116 - BAR_OX;
const PLOT_R = 1893 - BAR_OX;
const PLOT_T = 277 - BAR_OY;
const PLOT_B = 945 - BAR_OY;
const UNIT = 0.3372;
const SLOT = (PLOT_R - PLOT_L) / 27;

const GREEN = '#86bc49';
const BLUE = '#024a78';
const PURPLE = '#4b2283';

const barData = [
  ['Antalya', 92, 611, 289],
  ['Berlin', 235, 605, 344],
  ['Budapest', 50, 338, 0],
  ['Bukarest', 0, 125, 984],
  ['Chicago', 280, 430, 688],
  ['Doha', 222, 561, 176],
  ['Düsseldorf', 273, 909, 617],
  ['Frankfurt', 649, 442, 230],
  ['Göteborg', 104, 961, 76],
  ['Graz', 562, 456, 333],
  ['Helsinki', 593, 728, 0],
  ['Karlsruhe', 472, 894, 260],
  ['Köln', 212, 603, 209],
  ['London', 0, 394, 80],
  ['Mailand', 0, 713, 644],
  ['München', 206, 510, 713],
  ['New York', 276, 784, 516],
  ['Nürnberg', 0, 510, 632],
  ['Reykjavik', 0, 616, 734],
  ['Rom', 0, 777, 320],
  ['Saarbrücken', 363, 1054, 0],
  ['Salzburg', 0, 838, 590],
  ['Stockholm', 0, 715, 546],
  ['Stuttgart', 344, 569, 83],
  ['Warschau', 552, 651, 151],
  ['Wien', 255, 1067, 61],
  ['Zürich', 0, 903, 461],
];

const series = [
  { c: GREEN, edge: '#74a53d', text: '#7fae45', border: '#86ad4f' },
  { c: BLUE, edge: BLUE, text: '#23406e', border: BLUE },
  { c: PURPLE, edge: PURPLE, text: '#4b3a8a', border: PURPLE },
];

const slotCenter = (i) => PLOT_L + (i + 0.5) * SLOT;
const yOf = (v) => PLOT_B - v * UNIT;

const BarChart = () => {
  const gridValues = Array.from({ length: 20 }, (_, i) => i * 100);
  const minor = Array.from({ length: 99 }, (_, i) => i * 20).filter((v) => yOf(v) > PLOT_T);
  const labels = [];
  const rects = [];
  barData.forEach(([, ...vals], i) => {
    let base = 0;
    vals.forEach((v, s) => {
      if (!v) return;
      rects.push(
        <rect
          key={`${i}-${s}`}
          x={Math.round(slotCenter(i) - 9) + 0.5}
          y={yOf(base + v)}
          width="18"
          height={v * UNIT}
          fill={series[s].c}
          stroke={series[s].edge}
          strokeWidth=".8"
        />
      );
      labels.push({ key: `${i}-${s}`, v, s, x: slotCenter(i), y: yOf(base + v / 2) });
      base += v;
    });
  });
  return (
    <Canvas>
      <ChartSvg>
        {gridValues.slice(1).map((v) => (
          <line key={v} x1={PLOT_L} x2={PLOT_R} y1={Math.round(yOf(v)) + 0.5} y2={Math.round(yOf(v)) + 0.5} stroke="#dcdcdc" strokeWidth="1.4" />
        ))}
        <path d={`M${PLOT_L + 0.5} ${PLOT_B + 0.5}V${PLOT_T + 0.5}H${PLOT_R + 0.5}V${PLOT_B + 0.5}Z`} fill="none" stroke="#adadad" />
        {minor.map((v) => (
          <line key={v} x1={PLOT_L - (v % 100 ? 3 : 6)} x2={PLOT_L} y1={Math.round(yOf(v)) + 0.5} y2={Math.round(yOf(v)) + 0.5} stroke="#a0a0a0" />
        ))}
        {gridValues.map((v) => (
          <text key={v} x={PLOT_L - 11} y={yOf(v) + 4} textAnchor="end" fill="#23273a">
            {v}
          </text>
        ))}
        {Array.from({ length: 82 }, (_, i) => {
          const x = PLOT_L + (i * SLOT) / 3 + SLOT / 6;
          const major = (i - 1) % 3 === 0;
          return <line key={i} x1={x} x2={x} y1={PLOT_B} y2={PLOT_B + (major ? 6 : 3)} stroke="#a0a0a0" />;
        })}
        {rects}
        {barData.map(([name], i) => {
          const x = slotCenter(i) - 1;
          return (
            <text key={name} x={x} y="696" transform={`rotate(45 ${x} 696)`} fill="#2c3040">
              {name}
            </text>
          );
        })}
      </ChartSvg>
      {labels.map((l) => (
        <ChartLabel key={l.key} $x={l.x} $y={l.y} $c={series[l.s].text} $b={series[l.s].border} $px={1.5}>
          {l.v}
        </ChartLabel>
      ))}
    </Canvas>
  );
};

const LegendCheck = ({ c }) => (
  <LegendBox $c={c}>
    <svg width="11" height="11" viewBox="0 0 11 11">
      <path d="M1.5 6l3 3 5-8" fill="none" stroke={c} strokeWidth="2" />
    </svg>
  </LegendBox>
);

/* ---------- page ---------- */

const App = () => (
  <Page>
    <Global />
    <TitleBar>
      <TopRow>
        <TopLeft>
          <Qat>
            <svg width="16" height="18" viewBox="0 0 16 18">
              <circle cx="8" cy="9" r="6.5" fill="#dfe5ee" stroke="#6d93bf" strokeWidth="2" strokeDasharray="5 2" />
            </svg>
            <svg width="17" height="16" viewBox="0 0 17 16">
              <path d="M1 5h6l1 2h7v8H1z" fill="#b59a63" />
              <path d="M7 6c1-3 3-4 6-4V0l4 3-4 3V4c-2 0-4 1-6 2z" fill="#5b87b8" />
            </svg>
            <svg width="15" height="16" viewBox="0 0 15 16">
              <path d="M1 1h13v14H1z" fill="#d9d2e2" stroke="#8f5fb0" strokeWidth="2" />
              <rect x="4" y="1" width="7" height="5" fill="#8f5fb0" />
              <rect x="4" y="10" width="7" height="5" fill="#8f5fb0" />
            </svg>
            <svg width="16" height="16" viewBox="0 0 16 16">
              <path d="M2 8a6 6 0 0 1 10-4M14 8a6 6 0 0 1-10 4" fill="none" stroke="#3f7dbb" strokeWidth="2.4" />
              <path d="M9 6l5-4v5zM7 10l-5 4V9z" fill="#3f7dbb" />
            </svg>
            <QatArrow width="9" height="8" viewBox="0 0 9 8">
              <path d="M1 0h7M1 3h7L4.5 7z" fill="#2a2e40" stroke="#2a2e40" />
            </QatArrow>
          </Qat>
          <ContextTab>SimChart</ContextTab>
        </TopLeft>
        <WindowTitle>SimAssist_Release_Test_Project_32_bit - SimAssist (32-Bit)</WindowTitle>
        <WindowButtons>
          <WindowButton $w={29}>
            <svg width="10" height="10" viewBox="0 0 10 10">
              <rect y="6" width="9" height="2" fill="#666a78" />
            </svg>
          </WindowButton>
          <WindowButton $w={28}>
            <svg width="11" height="11" viewBox="0 0 11 11">
              <path d="M3.5 3V.5h7v5H8M.5 3.5h7v6h-7z" fill="none" stroke="#666a78" strokeWidth="1.4" />
            </svg>
          </WindowButton>
          <WindowButton $w={28}>
            <svg width="10" height="10" viewBox="0 0 10 10">
              <path d="M1 1l8 8m0-8L1 9" stroke="#666a78" strokeWidth="2" />
            </svg>
          </WindowButton>
        </WindowButtons>
      </TopRow>
      <TabRow>
        <FileButton>
          <svg width="26" height="13" viewBox="0 0 26 13">
            <rect x=".5" y=".5" width="14" height="12" rx="1.5" fill="#fff" stroke="#555" />
            <path d="M5 1v11M7 4h6M7 6.5h6M7 9h6" stroke="#555" />
            <path d="M18 4h7l-3.5 5z" fill="#fff" stroke="#666" />
          </svg>
        </FileButton>
        <RibbonTab $w={49}>Start</RibbonTab>
        <RibbonTab $w={61}>Ansicht</RibbonTab>
        <RibbonTab $w={65} $ml={6} $active>
          SimChart
        </RibbonTab>
        <HelpIcons>
          <HelpIcon>i</HelpIcon>
          <HelpIcon>?</HelpIcon>
        </HelpIcons>
      </TabRow>
    </TitleBar>

    <Ribbon>
      <Group $w={129}>
        <GroupBody $pl={4}>
          <RButton w={62} icon="db" lines={['Datenquelle']} />
          <RButton w={62} icon="disconnect" lines={['Trennen']} />
        </GroupBody>
        <GroupFooter>Datenquelle</GroupFooter>
        <Launcher />
      </Group>
      <Group $w={79}>
        <GroupBody>
          <RButton w={78} icon="orient" lines={['Orientierung']} caret="below" />
        </GroupBody>
        <GroupFooter>Ansicht</GroupFooter>
        <Launcher />
      </Group>
      <Group $w={380}>
        <GroupBody $pl={7}>
          <RButton w={52} icon="designer" lines={['Diagramm', 'Designer']} />
          <RButton w={54} icon="colors" lines={['Farben']} />
          <RButton w={54} icon="exportDoc" lines={['Diagramm', 'Export']} caret="inline" />
          <RButton w={59} icon="legend" lines={['Legende']} caret="below" />
          <RButton w={74} icon="title" lines={['Diagrammtitel']} />
          <RButton w={76} icon="letter" lines={['Beschriftung']} caret="below" />
        </GroupBody>
        <GroupFooter>Diagramm</GroupFooter>
        <Launcher />
      </Group>
      <Group $w={232}>
        <GroupBody $pl={2}>
          <RButton w={45} icon="column" lines={['Säule']} caret="below" />
          <RButton w={45} icon="line" lines={['Linie']} caret="below" />
          <RButton w={45} icon="pie" lines={['Torte']} caret="below" />
          <RButton w={45} icon="bar" lines={['Balken']} caret="below" />
          <RButton w={45} icon="area" lines={['Fläche']} caret="below" />
        </GroupBody>
        <GroupFooter>Diagrammtyp</GroupFooter>
        <Launcher />
      </Group>
      <Group $w={346}>
        <GroupBody $pl={2}>
          <RButton w={45} icon="xtitle" lines={['X-Titel']} />
          <RButton w={45} icon="ytitle" lines={['Y-Titel']} />
          <RibbonSep $ml={4} $mr={6} />
          <RButton w={50} icon="xvalues" lines={['X-Werte']} active />
          <RButton w={50} ml={3} icon="yvalues" lines={['Y-Werte']} active />
          <RibbonSep $ml={4} $mr={3} />
          <RButton w={66} icon="xzoom" lines={['X-Zooming']} />
          <RButton w={60} icon="yzoom" lines={['Y-Zooming']} />
        </GroupBody>
        <GroupFooter>Achsen</GroupFooter>
        <Launcher />
      </Group>
      <Group $w={109}>
        <GroupBody $pl={5}>
          <RButton w={42} icon="pivot" lines={['Pivot', 'Felder']} active />
          <RButton w={52} ml={3} icon="exportDoc" lines={['Pivot', 'Export']} caret="inline" />
        </GroupBody>
        <GroupFooter>Pivot</GroupFooter>
        <Launcher />
      </Group>
      <Collapse width="12" height="10" viewBox="0 0 12 10">
        <path d="M1 5l5-4 5 4M1 9l5-4 5 4" fill="none" stroke="#777b8a" strokeWidth="1.4" />
      </Collapse>
    </Ribbon>

    <Body>
      <ModulePanel>
        <ModuleHeader>
          Module
          <svg width="8" height="10" viewBox="0 0 8 10">
            <path d="M2 0h4v5h1.5v1h-3v4h-1V6h-3V5H2z" fill="#777b8a" />
          </svg>
        </ModuleHeader>
        <ModuleTree />
      </ModulePanel>

      <Workspace>
        <DocTabs>
          <DocTab>
            SimAssist_Release_Test_Project_32_bit
            <TabClose />
          </DocTab>
          <DocArrow>
            <ArrowDown />
          </DocArrow>
        </DocTabs>
        <DocPanel>
          <SideTabs>
            <SideTab $h={75}>Projektinhalt</SideTab>
            <SideTab $h={42}>Daten</SideTab>
          </SideTabs>
          <Pane>
            <PaneTabs $pl={3}>
              <PaneTab $w={149}>
                <svg width="16" height="16" viewBox="0 0 16 16">
                  {treeIcons.db}
                </svg>
                Database Definition
              </PaneTab>
              <PaneTab $w={127} $active>
                <svg width="16" height="16" viewBox="0 0 16 16">
                  {treeIcons.pie}
                </svg>
                SimPie_Access
                <TabClose />
              </PaneTab>
              <PaneTab $w={120} $mr={1}>
                <SmallGrid />
                Table_Access
              </PaneTab>
              <PaneTab $w={115} $mr={1}>
                <SmallGrid />
                Table_ODBC
              </PaneTab>
              <PaneTab $w={78} $mr={1}>
                <SmallGrid />
                Pivot
              </PaneTab>
              <PaneTab $w={118} $mr={1}>
                <SmallGrid />
                Table_Oracle
              </PaneTab>
              <PaneTab $w={90}>
                <SmallGrid />
                Table_SQLite
              </PaneTab>
              <PaneControls $r={0} $gap={13} $pl={5} $pr={10}>
                <ArrowDown />
                <svg width="6" height="10" viewBox="0 0 6 10">
                  <path d="M6 0v10L0 5z" fill="#c3c5ce" />
                </svg>
                <svg width="6" height="10" viewBox="0 0 6 10">
                  <path d="M0 0v10l6-5z" fill="#6d7080" />
                </svg>
              </PaneControls>
            </PaneTabs>
            <ChartBox>
              <PieTitle>FLG_Passengers</PieTitle>
              <PieChart />
            </ChartBox>
          </Pane>
          <Pane>
            <PaneTabs $pl={2}>
              <PaneTab $w={141} $active>
                <svg width="16" height="16" viewBox="0 0 16 16">
                  {treeIcons.chart}
                </svg>
                SimChart_Access
                <TabClose />
              </PaneTab>
              <PaneControls $r={9}>
                <ArrowDown />
              </PaneControls>
            </PaneTabs>
            <ChartBox>
              <BarTitle>Passagierverteilung</BarTitle>
              <Legend>
                <LegendItem $mr={9}>
                  <LegendCheck c={GREEN} />
                  Anflug
                </LegendItem>
                <LegendItem $mr={9}>
                  <LegendCheck c={BLUE} />
                  Gelandet
                </LegendItem>
                <LegendItem $mr={0}>
                  <LegendCheck c={PURPLE} />
                  Gepäckausgabe
                </LegendItem>
              </Legend>
              <BarChart />
            </ChartBox>
          </Pane>
        </DocPanel>
      </Workspace>
    </Body>

    <StatusBar>Bereit</StatusBar>
  </Page>
);

export default App;
